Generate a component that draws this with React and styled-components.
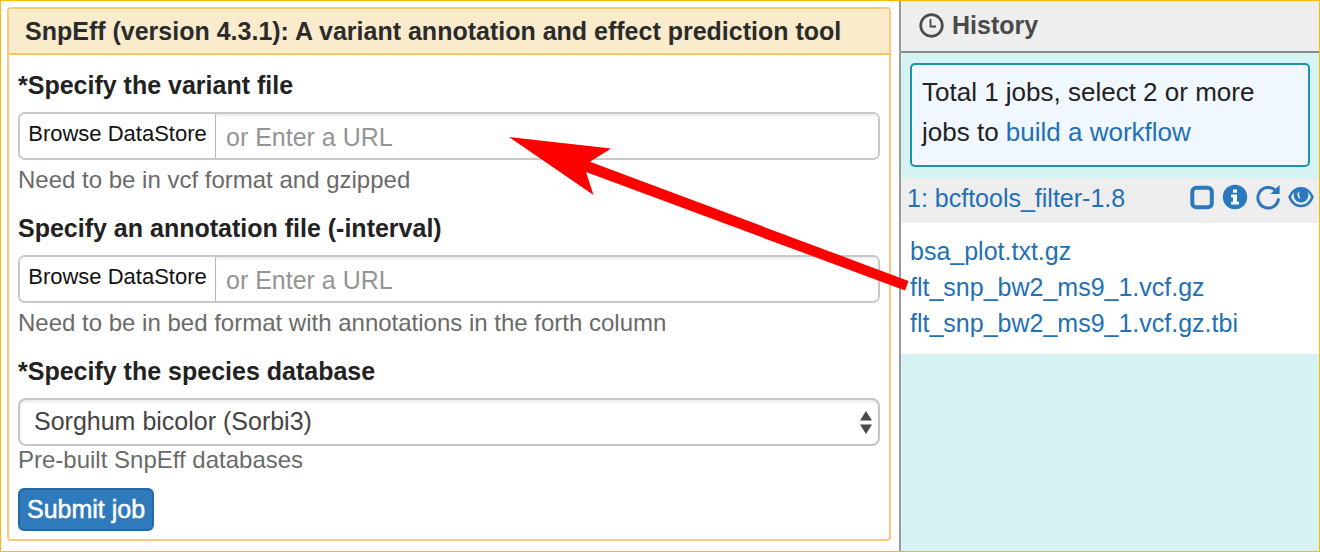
import React from "react";
import styled, { createGlobalStyle } from "styled-components";

const GlobalStyle = createGlobalStyle`
  *, *::before, *::after { box-sizing: border-box; }
  body {
    margin: 0;
    background: #fff;
    color: #222;
    font-family: "Liberation Sans", Arial, sans-serif;
    font-size: 25px;
  }
  button, input, select { font: inherit; margin: 0; }
`;

const Page = styled.div`
  position: relative;
  display: flex;
  min-height: 100vh;
  border: 1px solid #fbba07;
`;

const Main = styled.main`
  flex: 1;
  min-width: 0;
  padding: 6px 8px 10px 6px;
`;

const Card = styled.section`
  border: 2px solid #fdc877;
  border-radius: 4px;
`;

const CardTitle = styled.h1`
  margin: 0;
  padding: 0 16px;
  border-bottom: 2px solid #fdc368;
  background: #faebcc;
  color: #2b2b2b;
  font-size: 25px;
  line-height: 44px;
`;

const Form = styled.form`
  padding: 12px 9px 8px;
`;

const Label = styled.label`
  display: block;
  margin-bottom: 9px;
  color: #222;
  font-weight: bold;
  line-height: 36px;
`;

const InputGroup = styled.div`
  display: flex;
  height: 48px;
  border: 2px solid #c8c8c8;
  border-radius: 7px;
  overflow: hidden;
`;

const BrowseButton = styled.button`
  flex: none;
  width: 196px;
  padding: 0 0 4px;
  border: 0;
  border-right: 1px solid #b8b8b8;
  background: #fff;
  color: #111;
  font-size: 22px;
  white-space: nowrap;
`;

const UrlInput = styled.input`
  flex: 1;
  min-width: 0;
  padding: 3px 10px 0;
  border: 0;
  outline: 0;
  background: #fff;
  box-shadow: inset 0 2px 2px #eee;
  &::placeholder { color: #949494; opacity: 1; }
`;

const Help = styled.p`
  margin: ${(p) => (p.$tight ? "0 0 14px" : "6px 0 16px")};
  color: #6a6a6a;
  font-size: 24px;
  line-height: 28px;
`;

const SelectWrap = styled.div`
  position: relative;
`;

const Select = styled.select`
  display: block;
  width: 100%;
  height: 48px;
  padding: 0 40px 2px 14px;
  border: 2px solid #c6c6c6;
  border-radius: 8px;
  appearance: none;
  background: #fff;
  box-shadow: inset 0 2px 3px #eaeaea;
  color: #444;
`;

const SelectArrows = styled.svg`
  position: absolute;
  top: 13px;
  right: 8px;
  pointer-events: none;
`;

const SubmitButton = styled.button`
  display: block;
  height: 43px;
  padding: 0 7px;
  border: 2px solid #2468a6;
  border-radius: 6px;
  background: #2f7abc;
  color: #fff;
  -webkit-text-stroke: 0.5px #fff;
  white-space: nowrap;
`;

const Sidebar = styled.aside`
  flex: none;
  width: 420px;
  border-left: 2px solid #9a9a9a;
  background: #d6f3f3;
`;

const SidebarHeader = styled.header`
  display: flex;
  align-items: center;
  gap: 8px;
  height: 52px;
  padding: 0 18px 2px;
  border-bottom: 2px solid #8a8a8a;
  background: #eee;
  color: #4a4a4a;
`;

const SidebarTitle = styled.h2`
  margin: 0;
  font-size: 25px;
  line-height: 36px;
`;

const Notice = styled.p`
  margin: 10px 9px 11px;
  padding: 7px 10px 13px;
  border: 2px solid #1c94a6;
  border-radius: 5px;
  background: #f0f7ff;
  font-size: 26px;
  line-height: 40px;
`;

const NoticeLine = styled.span`
  display: block;
`;

const Link = styled.a`
  color: #2270b5;
  text-decoration: none;
`;

const JobRow = styled.div`
  display: flex;
  align-items: center;
  justify-content: space-between;
  height: 45px;
  padding: 0 5px 4px 6px;
  background: #eee;
`;

const JobActions = styled.div`
  display: flex;
  align-items: center;
  gap: 8px;
  padding-bottom: 4px;
`;

const IconButton = styled.button`
  display: flex;
  padding: 0;
  border: 0;
  background: none;
  color: #2a78bd;
`;

const FileList = styled.ul`
  margin: 0;
  padding: 10px 9px 13px;
  background: #fff;
  list-style: none;
  line-height: 36px;
`;

const Pointer = styled.svg`
  position: absolute;
  top: 135px;
  right: 409px;
  pointer-events: none;
`;

const ClockIcon = () => (
  <svg width="25" height="25" viewBox="0 0 25 25" fill="none" stroke="currentColor" aria-hidden="true">
    <circle cx="12.5" cy="12.5" r="10.8" strokeWidth="2.7" />
    <path d="M11.500 6V13.500H17" strokeWidth="1.8" />
  </svg>
);

const SquareIcon = () => (
  <svg width="24" height="26" viewBox="0 0 24 26" fill="none" stroke="currentColor" aria-hidden="true">
    <rect x="2.300" y="3.800" width="19.500" height="19.500" rx="4" strokeWidth="4" />
  </svg>
);

const InfoIcon = () => (
  <svg width="26" height="26" viewBox="0 0 26 26" aria-hidden="true">
    <circle cx="13" cy="13" r="12.2" fill="currentColor" />
    <path fill="#fff" d="M11 5.4h4v3.4h-4zM9 10.6h6v7.2h2v2.6H9v-2.6h2v-4.6H9z" />
  </svg>
);

const RepeatIcon = () => (
  <svg width="24" height="26" viewBox="0 0 24 26" aria-hidden="true">
    <path d="M19.2 6.200A10.300 10.300 0 1 0 22.500 14.400" fill="none" stroke="currentColor" strokeWidth="3" />
    <path d="M23.6 1v9H14.4z" fill="currentColor" />
  </svg>
);

const EyeIcon = () => (
  <svg width="26" height="26" viewBox="0 0 26 26" aria-hidden="true">
    <path
      d="M1.500 13C3.800 7.600 8 4.200 13 4.200S22.200 7.600 24.500 13C22.200 18.600 18 22 13 22S3.800 18.600 1.500 13Z"
      fill="none"
      stroke="currentColor"
      strokeWidth="2.600"
      strokeLinejoin="round"
    />
    <circle cx="13" cy="11" r="7.400" fill="currentColor" />
    <path d="M9.400 11.200c.3 2 1.500 3.200 3.200 3.600-1.500-2-1.800-4.500-1.200-7.200-1.500.8-2.200 2-2 3.600Z" fill="#eee" />
  </svg>
);

const actions = [
  ["Select job", SquareIcon],
  ["Job details", InfoIcon],
  ["Run again", RepeatIcon],
  ["View outputs", EyeIcon],
];

const files = ["bsa_plot.txt.gz", "flt_snp_bw2_ms9_1.vcf.gz", "flt_snp_bw2_ms9_1.vcf.gz.tbi"];

const FileField = ({ id, label, help }) => (
  <>
    <Label htmlFor={id}>{label}</Label>
    <InputGroup>
      <BrowseButton type="button">Browse DataStore</BrowseButton>
      <UrlInput id={id} type="text" placeholder="or Enter a URL" />
    </InputGroup>
    <Help>{help}</Help>
  </>
);

export default function App() {
  return (
    <>
      <GlobalStyle />
      <Page>
        <Main>
          <Card>
            <CardTitle>SnpEff (version 4.3.1): A variant annotation and effect prediction tool</CardTitle>
            <Form onSubmit={(e) => e.preventDefault()}>
              <FileField id="variant" label="*Specify the variant file" help="Need to be in vcf format and gzipped" />
              <FileField
                id="interval"
                label="Specify an annotation file (-interval)"
                help="Need to be in bed format with annotations in the forth column"
              />
              <Label htmlFor="species">*Specify the species database</Label>
              <SelectWrap>
                <Select id="species" defaultValue="sorbi3">
                  <option value="sorbi3">Sorghum bicolor (Sorbi3)</option>
                </Select>
                <SelectArrows width="12" height="23" viewBox="0 0 12 23" fill="#4a4a4a" aria-hidden="true">
                  <path d="M6 0l6 9.500H0zM0 13.500h12L6 23z" />
                </SelectArrows>
              </SelectWrap>
              <Help $tight>Pre-built SnpEff databases</Help>
              <SubmitButton type="submit">Submit job</SubmitButton>
            </Form>
          </Card>
        </Main>
        <Sidebar>
          <SidebarHeader>
            <ClockIcon />
            <SidebarTitle>History</SidebarTitle>
          </SidebarHeader>
          <Notice>
            <NoticeLine>Total 1 jobs, select 2 or more</NoticeLine>
            <NoticeLine>
              jobs to <Link href="#workflow">build a workflow</Link>
            </NoticeLine>
          </Notice>
          <JobRow>
            <Link href="#job-1">1: bcftools_filter-1.8</Link>
            <JobActions>
              {actions.map(([name, Icon]) => (
                <IconButton key={name} type="button" aria-label={name}>
                  <Icon />
                </IconButton>
              ))}
            </JobActions>
          </JobRow>
          <FileList>
            {files.map((name) => (
              <li key={name}>
                <Link href={`#${name}`}>{name}</Link>
              </li>
            ))}
          </FileList>
        </Sidebar>
        <Pointer width="401" height="157" viewBox="0 0 401 157" fill="#f00" aria-hidden="true">
          <path d="M0 1L102 12.500 81 25.700 399.500 145 396 154.500 77 36 84.500 59z" />
        </Pointer>
      </Page>
    </>
  );
}
